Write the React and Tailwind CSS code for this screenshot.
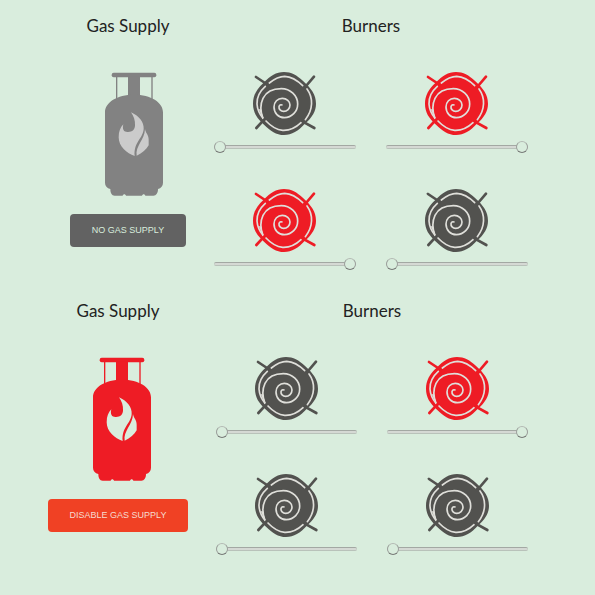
import React from "react";

function Burner({ on }) {
  return (
    <svg
      viewBox="36 30 198 198"
      className={`h-[66px] w-[66px] ${on ? "text-[#ee1c25]" : "text-[#52524f]"}`}
      fill="none"
      strokeLinecap="round"
      aria-hidden="true"
    >
      <path
        d="M132 36 C154 36 170 45 190 64 C214 86 228 104 228 131 C228 154 216 172 196 190 C174 214 156 225 132 225 C108 225 92 213 72 194 C50 174 39 156 39 131 C39 107 50 86 71 68 C92 47 108 36 132 36Z"
        fill="currentColor"
      />
      <g stroke="#dfdfda" strokeWidth="5">
        <path d="M88 69 C104 56 118 49 134 49 C156 50 172 61 188 77" />
        <path d="M201 87 C220 113 220 149 196 179" />
        <path d="M184 187 C165 205 147 212 128 211 C108 209 92 198 78 183" />
        <path d="M76 79 C58 95 50 113 51 132 C52 148 59 163 69 175" />
        <path d="M69 175 C62 157 60 134 69 115 C79 95 99 86 124 86 C151 86 173 107 173 132 C173 155 155 173 133 173 C115 173 102 159 102 141 C102 126 113 115 127 115 C140 115 150 124 150 135 C150 146 141 154 131 154 C122 154 116 147 117 140 C118 135 122 133 126 135" />
      </g>
      <path d="M56 148 L63 148 L70 176 Z" fill="#dfdfda" />
      <g stroke="currentColor" strokeWidth="8">
        <path d="M48 51 L84 75" />
        <path d="M222 50 L193 84" />
        <path d="M49 204 L73 178" />
        <path d="M187 184 L223 204" />
      </g>
    </svg>
  );
}

function Tank({ on }) {
  return (
    <svg
      viewBox="43 36 180 375"
      className={`h-[125px] w-[60px] ${on ? "text-[#ee1c25]" : "text-[#828282]"}`}
      fill="currentColor"
      aria-hidden="true"
    >
      <rect x="66" y="38" width="134" height="14" rx="6" />
      <rect x="79" y="50" width="4" height="70" />
      <rect x="185" y="50" width="4" height="70" />
      <rect x="115" y="50" width="36" height="60" />
      <path d="M46 157 C46 127 82 104 133 104 C184 104 220 127 220 157 V368 C220 378 214 384 205 387 C205 399 200 407 191 407 H167 C165 401 159 401 157 407 H109 C107 401 101 401 99 407 H75 C66 407 62 399 62 387 C52 384 46 378 46 368Z" />
      <g className={on ? "text-[#d9eddd]" : "text-[#cbcbcb]"}>
        <path d="M124 157 C147 167 164 187 162 207 C160 236 132 245 135 288 C111 280 87 260 87 232 C87 214 92 202 101 193 C97 209 103 216 113 216 C127 217 136 209 136 196 C137 181 132 168 124 157Z" />
        <path d="M166 207 C168 219 177 225 177 239 V256 C170 268 158 279 141 287 C136 258 165 240 166 207Z" />
      </g>
    </svg>
  );
}

function BurnerControl({ label, on }) {
  return (
    <div className="flex flex-col items-center">
      <Burner on={on} />
      <input
        type="range"
        aria-label={label}
        min="0"
        max="100"
        defaultValue={on ? 100 : 0}
        className="mt-1 h-3.5 w-full cursor-pointer appearance-none bg-transparent [&::-webkit-slider-runnable-track]:h-1 [&::-webkit-slider-runnable-track]:rounded-full [&::-webkit-slider-runnable-track]:border-y [&::-webkit-slider-runnable-track]:border-[#b9c2ba] [&::-webkit-slider-runnable-track]:border-t-[#a3a8a3] [&::-webkit-slider-runnable-track]:bg-[#d5d9d4] [&::-webkit-slider-thumb]:-mt-[5px] [&::-webkit-slider-thumb]:h-3 [&::-webkit-slider-thumb]:w-3 [&::-webkit-slider-thumb]:appearance-none [&::-webkit-slider-thumb]:rounded-full [&::-webkit-slider-thumb]:border [&::-webkit-slider-thumb]:border-[#9a9e9a] [&::-webkit-slider-thumb]:border-b-[#777a77] [&::-webkit-slider-thumb]:border-t-[#b4bab4] [&::-webkit-slider-thumb]:bg-[#d9eddd]"
      />
    </div>
  );
}

function Panel({ supplied, burners }) {
  return (
    <section
      className={`flex gap-7 pb-3.5 pr-[67px] pt-3 ${supplied ? "pl-12" : "pl-[70px]"}`}
    >
      <div className="flex shrink-0 flex-col items-center">
        <h2 className="text-[17px] leading-7">Gas Supply</h2>
        <div className={`mt-8 ${supplied ? "pl-2" : "pl-3"}`}>
          <Tank on={supplied} />
        </div>
        <button
          type="button"
          className={`mt-[17px] h-[33px] rounded-sm font-['Liberation_Sans',Arial,sans-serif] text-[9px] ${
            supplied
              ? "w-[140px] bg-[#f04124] text-[#f6dcd0]"
              : "w-[116px] bg-[#626262] text-[#d9eddd]"
          }`}
        >
          {supplied ? "DISABLE GAS SUPPLY" : "NO GAS SUPPLY"}
        </button>
      </div>
      <div className="min-w-0 flex-1">
        <h2 className="text-center text-[17px] leading-7">Burners</h2>
        <div className="mt-[30px] grid grid-cols-2 gap-x-[30px] gap-y-[33px]">
          {burners.map((on, i) => (
            <BurnerControl key={i} label={`Burner ${i + 1}`} on={on} />
          ))}
        </div>
      </div>
    </section>
  );
}

export default function App() {
  return (
    <main className="min-h-screen bg-[#d9eddd] font-[Lato,sans-serif] text-[#222222]">
      <Panel supplied={false} burners={[false, true, true, false]} />
      <Panel supplied burners={[false, true, false, false]} />
    </main>
  );
}
